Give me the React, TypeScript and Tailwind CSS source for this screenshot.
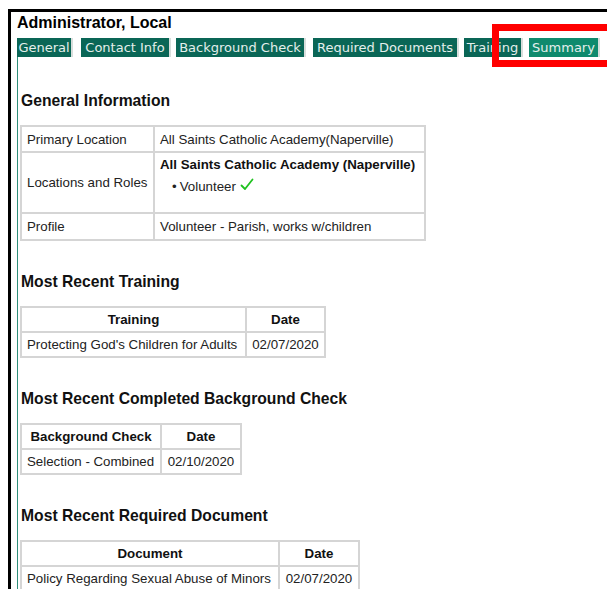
import React from 'react';

type Tab = { label: string; cls: string; active?: boolean };

const tabs: Tab[] = [
  { label: 'General', cls: 'w-[56px]' },
  { label: 'Contact Info', cls: 'w-[90px] ml-[8px]' },
  { label: 'Background Check', cls: 'w-[130px] ml-[5px]' },
  { label: 'Required Documents', cls: 'w-[146px] ml-[7px]' },
  { label: 'Training', cls: 'w-[59px] ml-[5px]' },
  { label: 'Summary', cls: 'w-[71px] ml-[6px]', active: true },
];

const cell = 'border-r-2 border-b-2 border-[#d5d5d5] px-[5px] text-[13.3px] leading-[15px] text-[#222] whitespace-nowrap';
const head = 'border-r-2 border-b-2 border-[#d5d5d5] px-[5px] text-[13.3px] leading-[15px] font-bold text-[#111] text-center whitespace-nowrap';

function Heading({ children, top }: { children: React.ReactNode; top: string }) {
  return (
    <h3 className={`${top} mb-[16px] ml-[3px] text-[15.7px] leading-[17px] font-bold text-[#111]`}>{children}</h3>
  );
}

function Check() {
  return (
    <svg width="14" height="13" viewBox="0 0 14 13" className="inline-block ml-[4px] -mt-[5px]">
      <path d="M1.5 7.5 L5 11 L12.5 1.5" fill="none" stroke="#1fc21f" strokeWidth="1.8" strokeLinecap="round" strokeLinejoin="round" />
    </svg>
  );
}

function TwoColTable({ rows, w1, w2 }: { rows: string[][]; w1: string; w2: string }) {
  return (
    <table className="ml-[2px] border-separate border-spacing-0 border-l-2 border-t-2 border-[#d5d5d5]">
      <tbody>
        <tr className="h-[25px]">
          <th className={`${head} ${w1}`}>{rows[0][0]}</th>
          <th className={`${head} ${w2}`}>{rows[0][1]}</th>
        </tr>
        <tr className="h-[25px]">
          <td className={cell}>{rows[1][0]}</td>
          <td className={`${cell} text-center`}>{rows[1][1]}</td>
        </tr>
      </tbody>
    </table>
  );
}

export default function App() {
  return (
    <div className="relative h-[589px] bg-white overflow-hidden" style={{ fontFamily: '"Liberation Sans", Arial, sans-serif' }}>
      <div className="ml-[8px] mt-[9px] border-l-[3px] border-t-[3px] border-black pl-[6px] pt-[2px] min-h-[580px]">
        <h1 className="text-[16px] leading-[18px] font-bold text-black">Administrator, Local</h1>

        <div className="mt-[6px] flex" style={{ fontFamily: '"DejaVu Sans", Verdana, sans-serif' }}>
          {tabs.map((t) => (
            <div
              key={t.label}
              className={`${t.cls} h-[19px] flex items-center justify-center text-[13px] leading-[15px] text-[#e4efec] border-r-2 border-[#d8dedc] whitespace-nowrap ${t.active ? 'bg-[#0f8a6d]' : 'bg-[#0a6656]'}`}
            >
              {t.label}
            </div>
          ))}
        </div>

        <div className="border-l border-[#2f8f7a] pt-[35px] pb-[40px] min-h-[540px]">
          <Heading top="mt-0">General Information</Heading>
          <table className="ml-[2px] border-separate border-spacing-0 border-l-2 border-t-2 border-[#d5d5d5]">
            <tbody>
              <tr className="h-[26px]">
                <td className={`${cell} w-[133px]`}>Primary Location</td>
                <td className={`${cell} w-[271px]`}>All Saints Catholic Academy(Naperville)</td>
              </tr>
              <tr className="h-[61px]">
                <td className={cell}>Locations and Roles</td>
                <td className={`${cell} align-top pt-[4px]`}>
                  <div className="font-bold text-[#111]">All Saints Catholic Academy (Naperville)</div>
                  <div className="mt-[7px] ml-[12px] pb-[15px]">
                    <span className="mr-[3px]">•</span>Volunteer
                    <Check />
                  </div>
                </td>
              </tr>
              <tr className="h-[27px]">
                <td className={cell}>Profile</td>
                <td className={cell}>Volunteer - Parish, works w/children</td>
              </tr>
            </tbody>
          </table>

          <Heading top="mt-[32px]">Most Recent Training</Heading>
          <TwoColTable
            rows={[['Training', 'Date'], ["Protecting God's Children for Adults", '02/07/2020']]}
            w1="w-[225px]"
            w2="w-[79px]"
          />

          <Heading top="mt-[32px]">Most Recent Completed Background Check</Heading>
          <TwoColTable
            rows={[['Background Check', 'Date'], ['Selection - Combined', '02/10/2020']]}
            w1="w-[140px]"
            w2="w-[80px]"
          />

          <Heading top="mt-[32px]">Most Recent Required Document</Heading>
          <TwoColTable
            rows={[['Document', 'Date'], ['Policy Regarding Sexual Abuse of Minors', '02/07/2020']]}
            w1="w-[258px]"
            w2="w-[80px]"
          />
        </div>
      </div>

      {/* highlight box around the Summary tab */}
      <div className="absolute left-[492px] top-[24px] w-[140px] h-[43px] border-[7px] border-[#ff0000]" />
    </div>
  );
}
